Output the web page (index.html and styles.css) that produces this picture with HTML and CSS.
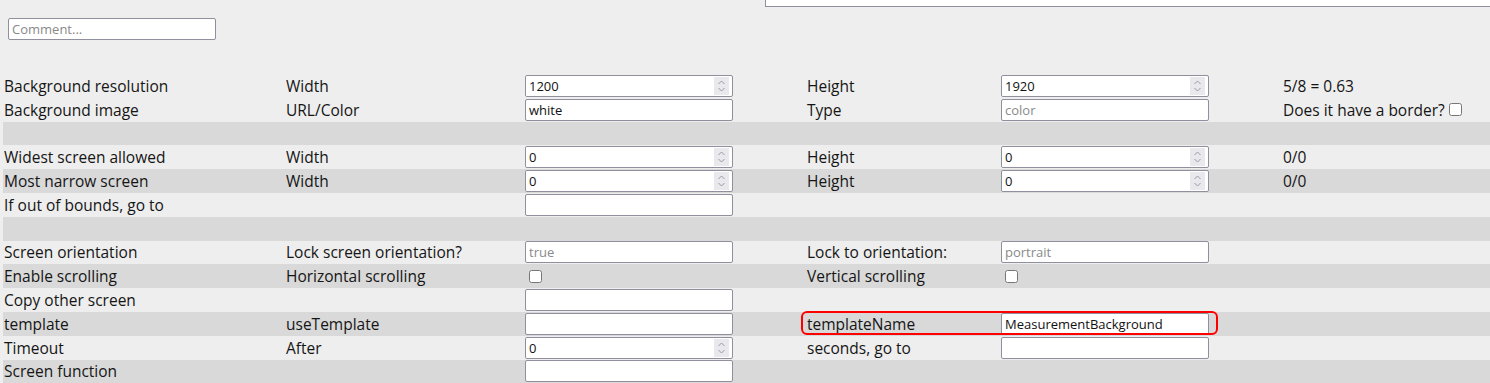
FILE: index.html
```html
<!DOCTYPE html>
<html lang="en">
<head>
  <meta charset="UTF-8" />
  <title>Screen settings</title>
  <link rel="stylesheet" href="styles.css">
</head>
<body>
  <div class="prev-box"></div>
  <div class="comment-row">
    <input type="text" class="comment" placeholder="Comment...">
  </div>

  <div class="settings">
    <div class="row">
      <span class="cell">Background resolution</span>
      <span class="cell">Width</span>
      <span class="cell"><span class="num"><input type="text" value="1200"><span class="spin"><svg width="9" height="14" viewBox="0 0 9 14"><path d="M1.5 5 L4.5 2 L7.5 5 M1.5 9 L4.5 12 L7.5 9" fill="none" stroke="#9a9aa6" stroke-width="1"/></svg></span></span></span>
      <span class="cell">Height</span>
      <span class="cell"><span class="num"><input type="text" value="1920"><span class="spin"><svg width="9" height="14" viewBox="0 0 9 14"><path d="M1.5 5 L4.5 2 L7.5 5 M1.5 9 L4.5 12 L7.5 9" fill="none" stroke="#9a9aa6" stroke-width="1"/></svg></span></span></span>
      <span class="cell">5/8 = 0.63</span>
    </div>
    <div class="row">
      <span class="cell">Background image</span>
      <span class="cell">URL/Color</span>
      <span class="cell"><input type="text" class="field" value="white"></span>
      <span class="cell">Type</span>
      <span class="cell"><input type="text" class="field" placeholder="color"></span>
      <span class="cell">Does it have a border? <input type="checkbox" class="check"></span>
    </div>
    <div class="row alt"></div>
    <div class="row">
      <span class="cell">Widest screen allowed</span>
      <span class="cell">Width</span>
      <span class="cell"><span class="num"><input type="text" value="0"><span class="spin"><svg width="9" height="14" viewBox="0 0 9 14"><path d="M1.5 5 L4.5 2 L7.5 5 M1.5 9 L4.5 12 L7.5 9" fill="none" stroke="#9a9aa6" stroke-width="1"/></svg></span></span></span>
      <span class="cell">Height</span>
      <span class="cell"><span class="num"><input type="text" value="0"><span class="spin"><svg width="9" height="14" viewBox="0 0 9 14"><path d="M1.5 5 L4.5 2 L7.5 5 M1.5 9 L4.5 12 L7.5 9" fill="none" stroke="#9a9aa6" stroke-width="1"/></svg></span></span></span>
      <span class="cell">0/0</span>
    </div>
    <div class="row alt">
      <span class="cell">Most narrow screen</span>
      <span class="cell">Width</span>
      <span class="cell"><span class="num"><input type="text" value="0"><span class="spin"><svg width="9" height="14" viewBox="0 0 9 14"><path d="M1.5 5 L4.5 2 L7.5 5 M1.5 9 L4.5 12 L7.5 9" fill="none" stroke="#9a9aa6" stroke-width="1"/></svg></span></span></span>
      <span class="cell">Height</span>
      <span class="cell"><span class="num"><input type="text" value="0"><span class="spin"><svg width="9" height="14" viewBox="0 0 9 14"><path d="M1.5 5 L4.5 2 L7.5 5 M1.5 9 L4.5 12 L7.5 9" fill="none" stroke="#9a9aa6" stroke-width="1"/></svg></span></span></span>
      <span class="cell">0/0</span>
    </div>
    <div class="row">
      <span class="cell">If out of bounds, go to</span>
      <span class="cell"></span>
      <span class="cell"><input type="text" class="field"></span>
    </div>
    <div class="row alt"></div>
    <div class="row">
      <span class="cell">Screen orientation</span>
      <span class="cell">Lock screen orientation?</span>
      <span class="cell"><input type="text" class="field" placeholder="true"></span>
      <span class="cell">Lock to orientation:</span>
      <span class="cell"><input type="text" class="field" placeholder="portrait"></span>
    </div>
    <div class="row alt">
      <span class="cell">Enable scrolling</span>
      <span class="cell">Horizontal scrolling</span>
      <span class="cell"><input type="checkbox" class="check"></span>
      <span class="cell">Vertical scrolling</span>
      <span class="cell"><input type="checkbox" class="check"></span>
    </div>
    <div class="row">
      <span class="cell">Copy other screen</span>
      <span class="cell"></span>
      <span class="cell"><input type="text" class="field"></span>
    </div>
    <div class="row alt">
      <span class="cell">template</span>
      <span class="cell">useTemplate</span>
      <span class="cell"><input type="text" class="field"></span>
      <div class="highlight">
        <span class="cell">templateName</span>
        <span class="cell"><input type="text" class="field" value="MeasurementBackground"></span>
      </div>
    </div>
    <div class="row">
      <span class="cell">Timeout</span>
      <span class="cell">After</span>
      <span class="cell"><span class="num"><input type="text" value="0"><span class="spin"><svg width="9" height="14" viewBox="0 0 9 14"><path d="M1.5 5 L4.5 2 L7.5 5 M1.5 9 L4.5 12 L7.5 9" fill="none" stroke="#9a9aa6" stroke-width="1"/></svg></span></span></span>
      <span class="cell">seconds, go to</span>
      <span class="cell"><input type="text" class="field"></span>
    </div>
    <div class="row alt">
      <span class="cell">Screen function</span>
      <span class="cell"></span>
      <span class="cell"><input type="text" class="field"></span>
    </div>
  </div>
</body>
</html>
```

FILE: styles.css
```css
body {
  margin: 0;
  background: #eeeeee;
  font-family: 'Open Sans', sans-serif;
  font-size: 15.5px;
  color: #151515;
  overflow: hidden;
}
.prev-box {
  margin-left: 765px;
  height: 6px;
  background: white;
  border-left: 1px solid #8f8f9d;
  border-bottom: 1px solid #8f8f9d;
}
.comment-row {
  padding: 11px 0 0 8px;
}
.comment {
  box-sizing: border-box;
  width: 208px;
  height: 22px;
  display: block;
}
input[type=text] {
  font-family: 'Open Sans', sans-serif;
  font-size: 13px;
  color: #111;
  border: 1px solid #8f8f9d;
  border-radius: 2px;
  background: white;
  padding: 0 3px;
  margin: 0;
  outline: none;
}
input::placeholder {
  color: #8a8a8a;
}
.settings {
  margin: 34px 0 0 3px;
}
.row {
  display: grid;
  grid-template-columns: 282px 239px 282px 194px 282px 1fr;
  height: 23.8px;
  align-items: center;
  white-space: nowrap;
}
.row.alt {
  background: #d9d9d9;
}
.cell {
  padding-left: 1px;
  display: flex;
  align-items: center;
}
.field {
  box-sizing: border-box;
  width: 208px;
  height: 22px;
}
.num {
  box-sizing: border-box;
  width: 208px;
  height: 22px;
  display: flex;
  align-items: center;
  background: white;
  border: 1px solid #8f8f9d;
  border-radius: 2px;
}
.num input[type=text] {
  border: none;
  flex: 1;
  min-width: 0;
  height: 20px;
}
.spin {
  width: 15px;
  height: 18px;
  margin-right: 3px;
  background: #e9e9ed;
  display: flex;
  align-items: center;
  justify-content: center;
}
.check {
  width: 13px;
  height: 13px;
  margin: 0 0 0 4px;
}
.highlight {
  grid-column: 4 / 6;
  display: grid;
  grid-template-columns: 194px 282px;
  align-items: center;
  position: relative;
}
.highlight::after {
  content: "";
  position: absolute;
  top: -2px;
  bottom: 0;
  left: -5px;
  right: 64px;
  border: 2px solid #ff0000;
  border-radius: 6px;
  pointer-events: none;
}
```
